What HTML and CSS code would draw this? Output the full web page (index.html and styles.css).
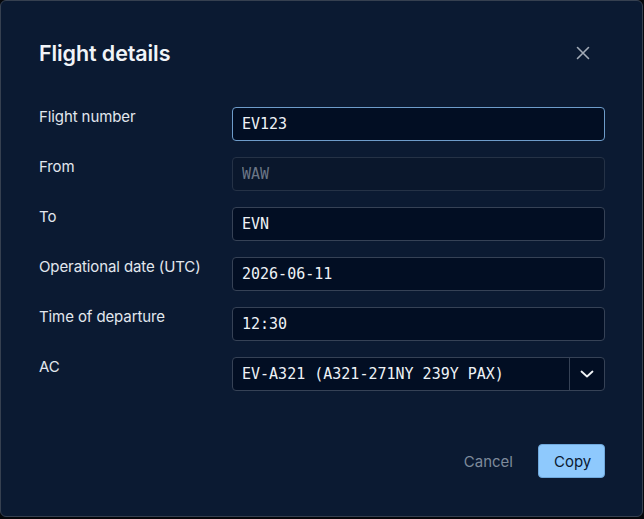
FILE: index.html
```html
<!DOCTYPE html>
<html lang="en">
<head>
<meta charset="utf-8">
<title>Flight details</title>
<link rel="stylesheet" href="styles.css">
</head>
<body>
<div class="dialog" role="dialog" aria-labelledby="dlg-title">
  <header class="dialog-head">
    <h1 id="dlg-title" class="dialog-title">Flight details</h1>
    <button class="close-btn" aria-label="Close">
      <svg width="14" height="14" viewBox="0 0 14 14" fill="none" stroke="currentColor" stroke-width="1.6" stroke-linecap="round"><path d="M1.5 1.5l11 11M12.5 1.5l-11 11"/></svg>
    </button>
  </header>
  <form class="form">
    <label class="label" for="f-num">Flight number</label>
    <input id="f-num" class="field focused" value="EV123">
    <label class="label" for="f-from">From</label>
    <input id="f-from" class="field" value="WAW" disabled>
    <label class="label" for="f-to">To</label>
    <input id="f-to" class="field" value="EVN">
    <label class="label" for="f-date">Operational date (UTC)</label>
    <input id="f-date" class="field" value="2026-06-11">
    <label class="label" for="f-time">Time of departure</label>
    <input id="f-time" class="field" value="12:30">
    <label class="label" for="f-ac">AC</label>
    <div class="select">
      <span id="f-ac" class="select-value">EV-A321 (A321-271NY 239Y PAX)</span>
      <span class="select-toggle">
        <svg width="14" height="8" viewBox="0 0 14 8" fill="none" stroke="currentColor" stroke-width="1.8" stroke-linecap="round" stroke-linejoin="round"><path d="M1.5 1.5l5.5 5 5.5-5"/></svg>
      </span>
    </div>
  </form>
  <footer class="dialog-foot">
    <button class="btn btn-ghost" type="button">Cancel</button>
    <button class="btn btn-primary" type="button">Copy</button>
  </footer>
</div>
</body>
</html>
```
FILE: styles.css
```css
* { box-sizing: border-box; }

html, body {
  margin: 0;
  height: 100%;
  background: #05070b;
}

body {
  font-family: Inter, "Noto Sans", sans-serif;
  color: #e4e9f0;
}

.dialog {
  width: 643px;
  height: 517px;
  background: #0b1a32;
  border: 1px solid #364050;
  border-radius: 6px;
  padding: 36px 37px 0 38px;
  display: flex;
  flex-direction: column;
}

.dialog-head {
  display: flex;
  align-items: center;
  justify-content: space-between;
  height: 32px;
}

.dialog-title {
  margin: 0;
  font-size: 21.5px;
  font-weight: 600;
  line-height: 32px;
  color: #f1f4f8;
  letter-spacing: -0.1px;
}

.close-btn {
  background: none;
  border: 0;
  padding: 0;
  margin-right: 15px;
  color: #a3abb7;
  display: flex;
}

.form {
  margin-top: 38px;
  display: grid;
  grid-template-columns: 193px 1fr;
  row-gap: 16px;
}

.label {
  font-size: 15px;
  line-height: 18px;
  color: #e2e7ee;
  padding-top: 1px;
  letter-spacing: -0.1px;
}

.field, .select {
  height: 34px;
  border: 1px solid #364256;
  border-radius: 4px;
  background: #020e23;
}

.field {
  width: 100%;
  padding: 0 9px;
  font-family: "DejaVu Sans Mono", monospace;
  font-size: 15px;
  color: #eef2f6;
  outline: none;
}

.field.focused {
  border-color: #6e9cca;
}

.field:disabled {
  background: #0a172c;
  border-color: #253246;
  color: #6b7686;
}

.select {
  display: flex;
  align-items: stretch;
}

.select-value {
  flex: 1;
  display: flex;
  align-items: center;
  padding: 0 9px;
  font-family: "DejaVu Sans Mono", monospace;
  font-size: 15px;
  color: #eef2f6;
}

.select-toggle {
  width: 35px;
  border-left: 1px solid #364256;
  display: flex;
  align-items: center;
  justify-content: center;
  color: #f2f5f8;
}

.dialog-foot {
  margin-top: 53px;
  display: flex;
  justify-content: flex-end;
  align-items: center;
  gap: 25px;
}

.btn {
  font-family: Inter, "Noto Sans", sans-serif;
  font-size: 15px;
  height: 34px;
  border-radius: 4px;
  padding: 0 15px;
}

.btn-ghost {
  background: none;
  border: 0;
  color: #7e8a9b;
  padding: 0;
}

.btn-primary {
  background: #8ec9fd;
  border: 1px solid #6fa8dc;
  color: #0b1a32;
  width: 67px;
}
```
